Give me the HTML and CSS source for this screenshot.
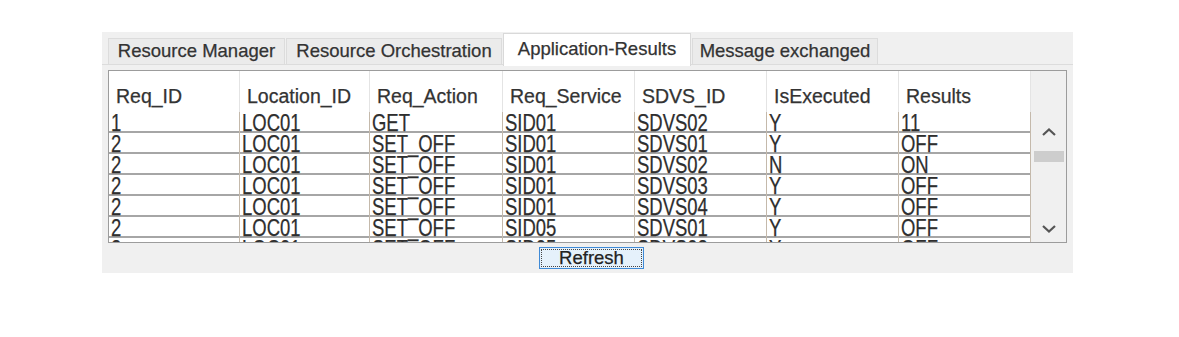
FILE: index.html
```html
<!DOCTYPE html>
<html>
<head>
<meta charset="utf-8">
<link rel="stylesheet" href="styles.css">
</head>
<body>
<div class="window">
  <div class="tabbar">
    <div class="tab tab-rm">Resource Manager</div>
    <div class="tab tab-ro">Resource Orchestration</div>
    <div class="tab tab-ar selected">Application-Results</div>
    <div class="tab tab-me">Message exchanged</div>
  </div>
  <div class="pane">
    <div class="frame">
      <div class="table">
        <div class="row head">
          <div class="hcell">Req_ID</div>
          <div class="hcell">Location_ID</div>
          <div class="hcell">Req_Action</div>
          <div class="hcell">Req_Service</div>
          <div class="hcell">SDVS_ID</div>
          <div class="hcell">IsExecuted</div>
          <div class="hcell">Results</div>
        </div>
        <div class="row data"><div class="cell"><span>1</span></div><div class="cell"><span>LOC01</span></div><div class="cell"><span>GET</span></div><div class="cell"><span>SID01</span></div><div class="cell"><span>SDVS02</span></div><div class="cell"><span>Y</span></div><div class="cell"><span>11</span></div></div>
        <div class="row data"><div class="cell"><span>2</span></div><div class="cell"><span>LOC01</span></div><div class="cell"><span>SET_OFF</span></div><div class="cell"><span>SID01</span></div><div class="cell"><span>SDVS01</span></div><div class="cell"><span>Y</span></div><div class="cell"><span>OFF</span></div></div>
        <div class="row data"><div class="cell"><span>2</span></div><div class="cell"><span>LOC01</span></div><div class="cell"><span>SET_OFF</span></div><div class="cell"><span>SID01</span></div><div class="cell"><span>SDVS02</span></div><div class="cell"><span>N</span></div><div class="cell"><span>ON</span></div></div>
        <div class="row data"><div class="cell"><span>2</span></div><div class="cell"><span>LOC01</span></div><div class="cell"><span>SET_OFF</span></div><div class="cell"><span>SID01</span></div><div class="cell"><span>SDVS03</span></div><div class="cell"><span>Y</span></div><div class="cell"><span>OFF</span></div></div>
        <div class="row data"><div class="cell"><span>2</span></div><div class="cell"><span>LOC01</span></div><div class="cell"><span>SET_OFF</span></div><div class="cell"><span>SID01</span></div><div class="cell"><span>SDVS04</span></div><div class="cell"><span>Y</span></div><div class="cell"><span>OFF</span></div></div>
        <div class="row data"><div class="cell"><span>2</span></div><div class="cell"><span>LOC01</span></div><div class="cell"><span>SET_OFF</span></div><div class="cell"><span>SID05</span></div><div class="cell"><span>SDVS01</span></div><div class="cell"><span>Y</span></div><div class="cell"><span>OFF</span></div></div>
        <div class="row data"><div class="cell"><span>2</span></div><div class="cell"><span>LOC01</span></div><div class="cell"><span>SET_OFF</span></div><div class="cell"><span>SID05</span></div><div class="cell"><span>SDVS02</span></div><div class="cell"><span>Y</span></div><div class="cell"><span>OFF</span></div></div>
      </div>
      <div class="scrollbar">
        <svg class="arrow up" width="14" height="8" viewBox="0 0 14 8"><path d="M1 7 L7 1.5 L13 7" fill="none" stroke="#555555" stroke-width="2.2"/></svg>
        <div class="thumb"></div>
        <div class="spacer"></div>
        <svg class="arrow down" width="14" height="8" viewBox="0 0 14 8"><path d="M1 1 L7 6.5 L13 1" fill="none" stroke="#555555" stroke-width="2.2"/></svg>
      </div>
    </div>
    <div class="actions">
      <button class="btn">Refresh</button>
    </div>
  </div>
</div>
</body>
</html>
```

FILE: styles.css
```css
* { box-sizing: border-box; }
html, body { margin: 0; padding: 0; background: #ffffff; }
body {
  font-family: "Liberation Sans", Arial, sans-serif;
  color: #333333;
  -webkit-text-stroke: 0.25px currentColor;
}

.window {
  margin: 32px 0 0 102px;
  width: 971px;
  height: 241px;
  background: #f0f0f0;
  display: flex;
  flex-direction: column;
}

.tabbar {
  height: 32px;
  flex: none;
  display: flex;
  align-items: flex-end;
  gap: 1px;
  padding-left: 6px;
}

.tab {
  height: 26px;
  background: #ebebeb;
  border: 1px solid #dcdcdc;
  border-bottom: none;
  font-size: 18.5px;
  line-height: 24px;
  padding-top: 0;
  text-align: center;
  white-space: nowrap;
  color: #333;
}
.tab-rm { width: 177px; }
.tab-ro { width: 216px; }
.tab-ar { width: 188px; }
.tab-me { width: 186px; }

.tab.selected {
  height: 33px;
  margin-bottom: -2px;
  padding-top: 3px;
  background: #ffffff;
  border-color: #d9d9d9;
  z-index: 1;
}

.pane {
  flex: 1;
  border-top: 1px solid #dcdcdc;
  padding: 5px 6px 0 6px;
  display: flex;
  flex-direction: column;
}

.frame {
  height: 173px;
  flex: none;
  border: 1px solid #9c9c9c;
  display: flex;
}

.table {
  width: 922px;
  flex: none;
  background: #ffffff;
  overflow: hidden;
}

.row {
  display: grid;
  grid-template-columns: 131px 130px 133px 132px 132px 132px 132px;
}

.head { height: 41px; }

.hcell {
  border-right: 1px solid #e4e4e4;
  font-size: 19.5px;
  line-height: 20px;
  padding: 15px 0 0 7px;
  white-space: nowrap;
  color: #333;
}

.data {
  height: 21px;
  border-bottom: 2px solid #a6a6a6;
}

.cell {
  border-right: 1px solid #c4b9ab;
  padding: 1px 0 0 2px;
  line-height: 19px;
  white-space: nowrap;
}
.cell span {
  display: inline-block;
  font-size: 24px;
  transform: scaleX(0.77);
  transform-origin: left center;
  color: #2e2e2e;
}

.scrollbar {
  width: 35px;
  flex: none;
  background: #f0f0f0;
  display: flex;
  flex-direction: column;
  align-items: center;
}
.arrow { flex: none; display: block; }
.arrow.up { margin-top: 57px; }
.thumb {
  width: 30px;
  height: 11px;
  margin-top: 15px;
  background: #cdcdcd;
  flex: none;
}
.spacer { flex: 1; }
.arrow.down { margin-bottom: 9px; }

.actions {
  flex: 1;
  display: flex;
  justify-content: center;
  align-items: flex-start;
  padding: 4px 0 0 8px;
}

.btn {
  width: 105px;
  height: 22px;
  padding: 0;
  border: 1px solid #3f8ad6;
  background: #e5f1fb;
  font-family: "Liberation Sans", Arial, sans-serif;
  font-size: 18.5px;
  line-height: 20px;
  color: #222;
  -webkit-text-stroke: 0.25px currentColor;
  outline: 1px dotted #444;
  outline-offset: -3px;
}
```
